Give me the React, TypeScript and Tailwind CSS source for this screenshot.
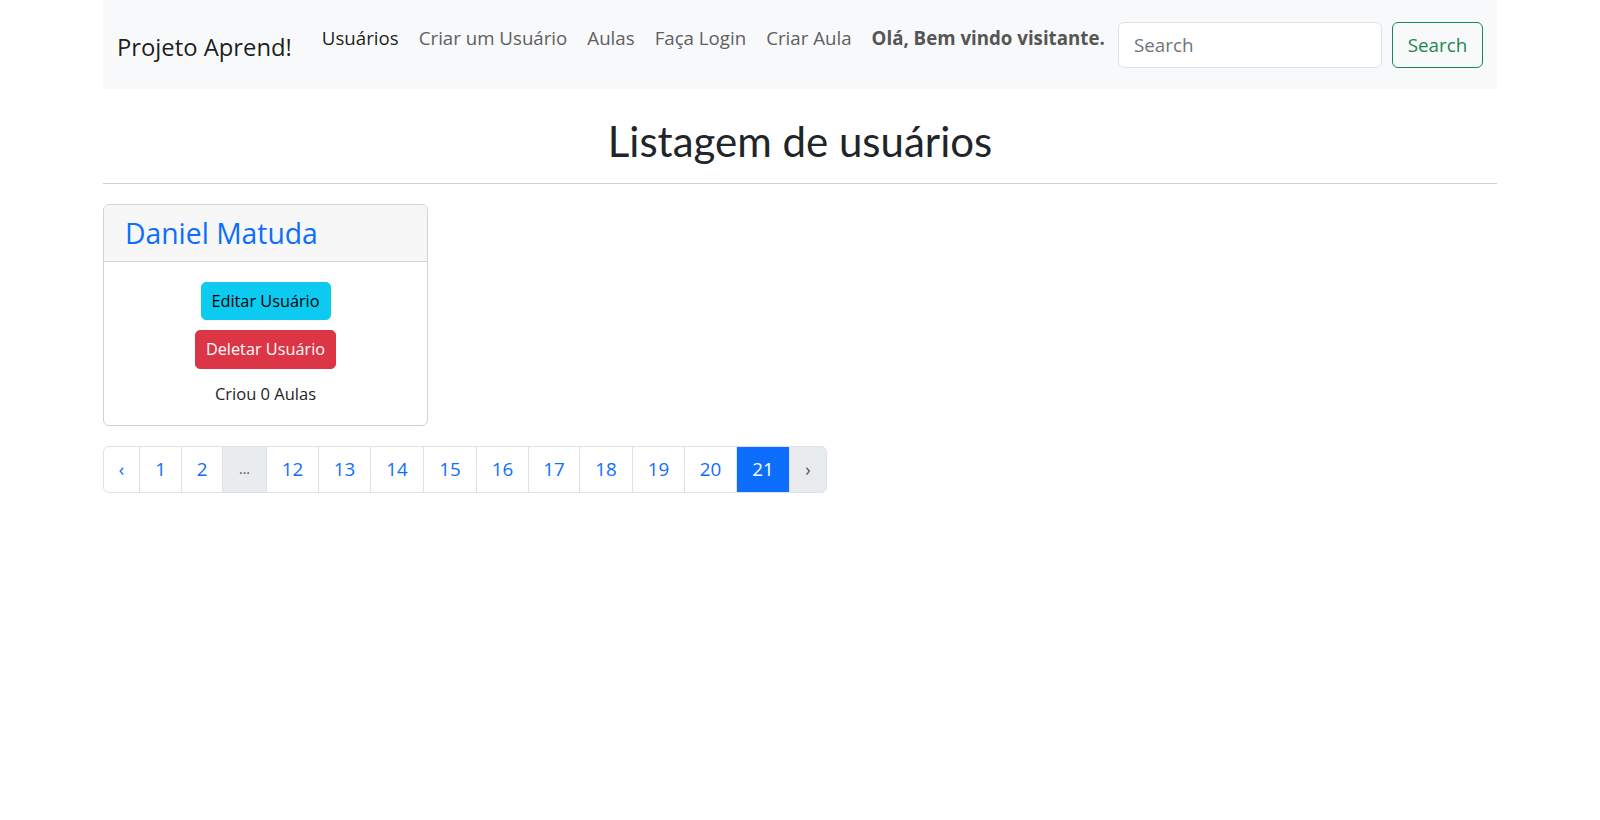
import React from 'react';

const navLinks = [
  { label: 'Usuários', active: true },
  { label: 'Criar um Usuário', active: false },
  { label: 'Aulas', active: false },
  { label: 'Faça Login', active: false },
  { label: 'Criar Aula', active: false },
];

const pages = [
  { label: '‹', w: 'w-[37px]', kind: 'arrow' },
  { label: '1', w: 'w-[43px]', kind: 'link' },
  { label: '2', w: 'w-[42px]', kind: 'link' },
  { label: '...', w: 'w-[45px]', kind: 'gap' },
  { label: '12', w: 'w-[53px]', kind: 'link' },
  { label: '13', w: 'w-[53px]', kind: 'link' },
  { label: '14', w: 'w-[54px]', kind: 'link' },
  { label: '15', w: 'w-[54px]', kind: 'link' },
  { label: '16', w: 'w-[53px]', kind: 'link' },
  { label: '17', w: 'w-[52px]', kind: 'link' },
  { label: '18', w: 'w-[54px]', kind: 'link' },
  { label: '19', w: 'w-[53px]', kind: 'link' },
  { label: '20', w: 'w-[53px]', kind: 'link' },
  { label: '21', w: 'w-[54px]', kind: 'active' },
  { label: '›', w: 'w-[38px]', kind: 'next' },
];

const pageClass = (kind: string) => {
  switch (kind) {
    case 'active':
      return 'bg-[#0d6efd] text-white border-[#0d6efd]';
    case 'gap':
      return 'bg-[#e9ecef] text-[#555] text-[14px] items-end pb-[13px]';
    case 'next':
      return 'bg-[#e9ecef] text-[#555] text-[18px] rounded-r-[6px]';
    case 'arrow':
      return 'bg-white text-[#0d6efd] text-[18px] rounded-l-[6px]';
    default:
      return 'bg-white text-[#0d6efd]';
  }
};

export default function App() {
  return (
    <div className="min-h-screen bg-white font-['Open_Sans','Liberation_Sans',sans-serif] text-[#212529]">
      <div className="mx-auto w-[1394px]">
        <nav className="flex h-[89px] items-start whitespace-nowrap bg-[#f8f9fa] pl-[14px] pr-[14px] pt-[22px]">
          <a className="mr-[20px] mt-[8px] shrink-0 text-[23.8px] leading-[34px] text-black/90">Projeto Aprend!</a>
          <ul className="mt-[2px] flex shrink-0 text-[18.7px] leading-[28px]">
            {navLinks.map((link) => (
              <li
                key={link.label}
                className={`px-[10px] ${link.active ? 'text-black/90' : 'text-[#5f6061]'}`}
              >
                {link.label}
              </li>
            ))}
            <li className="pl-[10px] font-bold text-[#555]">Olá, Bem vindo visitante.</li>
          </ul>
          <form className="ml-auto flex shrink-0 gap-[10px]">
            <input
              type="search"
              placeholder="Search"
              className="h-[46px] w-[264px] rounded-[6px] border border-[#dee2e6] bg-white px-[15px] text-[18.8px] text-[#212529] placeholder:text-[#6c757d] outline-none"
            />
            <button
              type="button"
              className="h-[46px] w-[91px] rounded-[6px] border border-[#198754] text-[18.8px] text-[#198754]"
            >
              Search
            </button>
          </form>
        </nav>

        <h1 className="mt-[29px] text-center font-['Lato','Open_Sans',sans-serif] text-[42px] leading-[46px] text-[#212529]">
          Listagem de usuários
        </h1>
        <div className="mt-[19px] border-t border-[#cfcfcf]" />

        <div className="mt-[20px] w-[325px] overflow-hidden rounded-[6px] border border-[#d3d3d3]">
          <div className="flex h-[57px] items-center border-b border-[#d3d3d3] bg-[#f7f7f7] pl-[21px]">
            <span className="text-[28.3px] leading-[34px] text-[#0d6efd]">Daniel Matuda</span>
          </div>
          <div className="flex flex-col items-center pb-[19px] pt-[20px]">
            <button
              type="button"
              className="h-[38px] w-[130px] rounded-[5px] border border-[#0dcaf0] bg-[#0dcaf0] text-[16.3px] text-black"
            >
              Editar Usuário
            </button>
            <button
              type="button"
              className="mt-[10px] h-[39px] w-[141px] rounded-[5px] border border-[#dc3545] bg-[#dc3545] text-[16.3px] text-white"
            >
              Deletar Usuário
            </button>
            <p className="mt-[12px] text-[16.5px] leading-[25px]">Criou 0 Aulas</p>
          </div>
        </div>

        <ul className="mt-[20px] flex h-[47px] text-[18.8px]">
          {pages.map((p, i) => (
            <li
              key={i}
              className={`flex h-full items-center justify-center border border-[#dee2e6] ${i > 0 ? '-ml-px' : ''} ${p.w} ${pageClass(p.kind)}`}
            >
              {p.label}
            </li>
          ))}
        </ul>
      </div>
    </div>
  );
}
